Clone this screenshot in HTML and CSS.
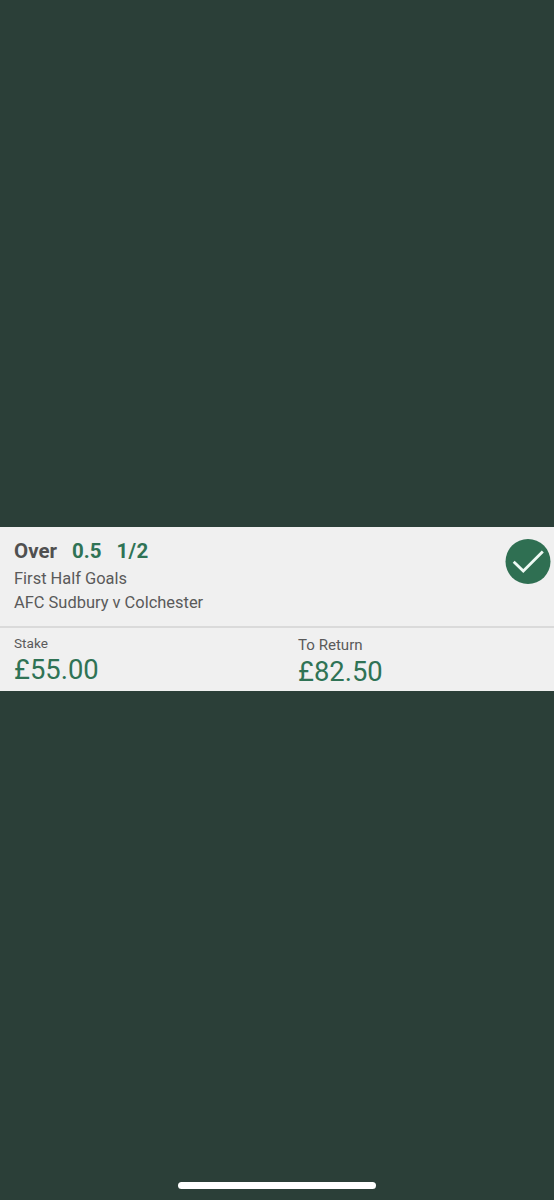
FILE: index.html
```html
<!DOCTYPE html>
<html lang="en">
<head>
<meta charset="utf-8">
<title>Bet receipt</title>
<link rel="stylesheet" href="styles.css">
</head>
<body>
<main class="screen">
  <section class="bet">
    <header class="selection">
      <div class="details">
        <h1 class="pick"><span class="name">Over</span><span class="line">0.5</span><span class="odds">1/2</span></h1>
        <p class="market">First Half Goals</p>
        <p class="event">AFC Sudbury v Colchester</p>
      </div>
      <svg class="tick" viewBox="0 0 46 46" aria-label="Won">
        <circle cx="23" cy="22.5" r="22.5"/>
        <path d="M8.7 22.7 18.3 32 37.8 12.6"/>
      </svg>
    </header>
    <div class="amounts">
      <div class="stake"><p class="label">Stake</p><p class="value">£55.00</p></div>
      <div class="return"><p class="label">To Return</p><p class="value">£82.50</p></div>
    </div>
  </section>
  <div class="home-bar"></div>
</main>
</body>
</html>
```
FILE: styles.css
```css
* { box-sizing: border-box; }
body, h1, p { margin: 0; }
body { background: #2b3f38; font-family: Roboto, "Liberation Sans", sans-serif; color: #5a5a5a; }
.screen { height: 1200px; padding-top: 527px; display: flex; flex-direction: column; }
.bet { background: #f0f0f0; height: 164px; }
.selection { height: 101px; padding: 12px 3px 0 14px; display: flex; justify-content: space-between; border-bottom: 2px solid #dadada; }
.pick { display: flex; font-size: 20.5px; line-height: 25px; font-weight: 700; color: #505050; }
.line, .odds { color: #2f7355; }
.line { margin-left: 15px; }
.odds { margin-left: 15px; letter-spacing: 0.4px; }
.market, .event { font-size: 16.45px; line-height: 25px; }
.market { margin-top: 2px; }
.event { margin-top: -1px; }
.tick { width: 46px; height: 46px; flex: none; }
.tick circle { fill: #2f6f52; }
.tick path { fill: none; stroke: #eefaf4; stroke-width: 2.8; }
.amounts { display: grid; grid-template-columns: 284px 1fr; padding-left: 14px; }
.stake { padding-top: 6px; }
.return { padding-top: 8px; }
.label { font-size: 13.6px; line-height: 18px; }
.return .label { font-size: 15.1px; }
.value { font-size: 27.4px; line-height: 34px; margin-top: 1px; color: #2f7355; }
.home-bar { width: 198px; height: 7px; border-radius: 4px; background: #fff; margin: auto 178px 11.5px; }
```
